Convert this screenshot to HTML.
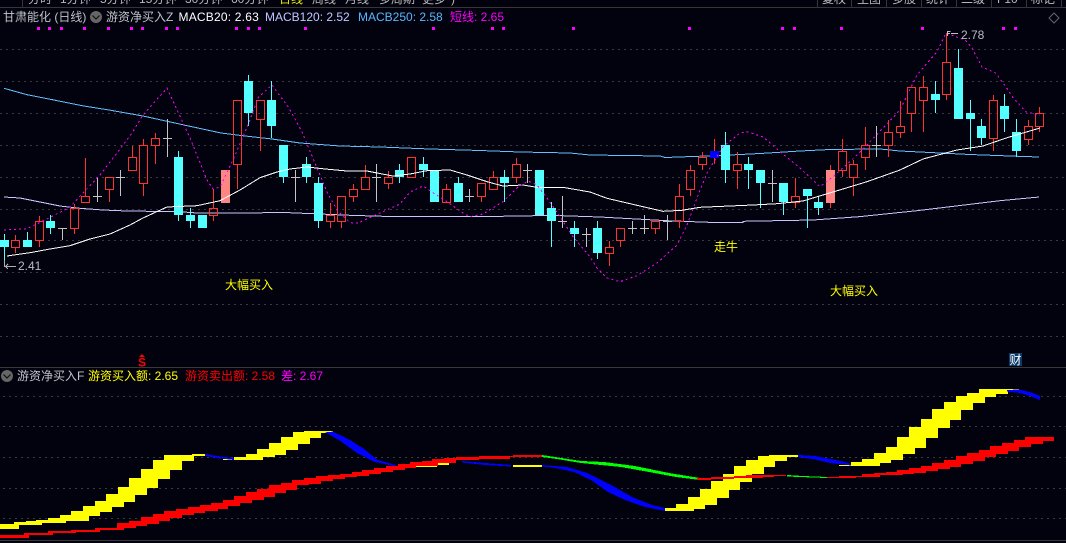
<!DOCTYPE html>
<html><head><meta charset="utf-8">
<style>
html,body{margin:0;padding:0;background:#02020e;width:1066px;height:543px;overflow:hidden}
svg{display:block}
text{font-family:"Liberation Sans","Noto Sans CJK SC",sans-serif;font-size:12px}
</style></head><body>
<svg width="1066" height="543" viewBox="0 0 1066 543" xmlns="http://www.w3.org/2000/svg">
<rect width="1066" height="543" fill="#02020e"/>

<!-- top bar -->
<g fill="#b8b8b8">
<text x="28" y="3">分时</text><text x="60" y="3">1分钟</text><text x="100" y="3">5分钟</text><text x="139" y="3">15分钟</text><text x="185" y="3">30分钟</text><text x="231" y="3">60分钟</text>
<text x="279" y="3" fill="#e8e800">日线</text><text x="312" y="3">周线</text><text x="345" y="3">月线</text><text x="379" y="3">多周期</text><text x="422" y="3">更多</text><text x="451" y="3">)</text>
<text x="822" y="3">复权</text><text x="857" y="3">主图</text><text x="892" y="3">多股</text><text x="926" y="3">统计</text><text x="961" y="3">二级</text><text x="997" y="3">F10</text><text x="1031" y="3">标记</text>
</g>
<path d="M0 7.5H1066M22.5 0V7M817.5 0V7M851.5 0V7M886.5 0V7M921.5 0V7M956.5 0V7M991.5 0V7M1026.5 0V7M1061.5 0V7" stroke="#363636" fill="none" shape-rendering="crispEdges"/>
<path d="M1054 13l5 5-5 5-5-5z" fill="none" stroke="#666"/>

<!-- header -->
<text x="3" y="21" fill="#bfc4c8">甘肃能化 (日线)</text>
<circle cx="96" cy="17" r="6" fill="#666"/><path d="M92.5 15.5l3.5 3.5 3.5-3.5" fill="none" stroke="#111" stroke-width="1.2"/>
<text x="106" y="21" fill="#bfc4c8">游资净买入Z</text>
<text x="178.5" y="21" fill="#fff" style="letter-spacing:.2px">MACB20: 2.63</text>
<text x="265" y="21" fill="#c0c8ff">MACB120: 2.52</text>
<text x="358" y="21" fill="#56b8ff">MACB250: 2.58</text>
<text x="450" y="21" fill="#ff00ff">短线: 2.65</text>

<!-- markers -->
<path d="M37 27h3v3h-3zM48 27h3v3h-3zM60 27h3v3h-3zM83 27h3v3h-3zM107 27h3v3h-3zM130 27h3v3h-3zM141 27h3v3h-3zM165 27h3v3h-3zM176 27h3v3h-3zM235 27h3v3h-3zM247 27h3v3h-3zM258 27h3v3h-3zM304 27h3v3h-3zM432 27h3v3h-3zM491 27h3v3h-3zM502 27h3v3h-3zM572 27h3v3h-3zM688 27h3v3h-3zM781 27h3v3h-3zM793 27h3v3h-3zM840 27h3v3h-3zM921 27h3v3h-3zM1002 27h3v3h-3zM1014 27h3v3h-3z" fill="#f0f"/>

<!-- grid -->
<path d="M0 49.5H1066M0 81.5H1066M0 113.5H1066M0 145.5H1066M0 177.5H1066M0 209.5H1066M0 240.5H1066M0 272.5H1066M0 304.5H1066M0 336.5H1066M3 396.5H1066M3 426.5H1066M3 457.5H1066M3 488.5H1066M3 518.5H1066" stroke="#3a3a3a" stroke-dasharray="2 4" fill="none" shape-rendering="crispEdges"/>

<!-- MA lines -->
<polyline fill="none" stroke="#62c0ff" shape-rendering="crispEdges" points="4,88.3 27,94.7 54,100 82,105.7 109,110 143,116 184,125 221,133 245,136 272,139 300,143 340,146 380,147 430,149 480,150.5 520,152 570,153 590,155 660,156 665,157.5 720,155.5 760,153.5 800,151 830,149.5 880,149 900,151 940,153 970,154.5 1010,156 1039,157"/>
<polyline fill="none" stroke="#c8c4ff" shape-rendering="crispEdges" points="4,197 20,198 60,206 80,208.3 103,210 127,211 180,211.7 197,213 253,213 280,212.3 350,215.3 383,216.3 470,216.7 523,216 550,215.3 600,217 667,220.7 709,222.3 743,222.3 743,221.3 813,220 859,216.7 917,210.7 1000,200.7 1039,197"/>

<!-- candles -->
<path d="M0 240h9v7h-9zM23 240h9v7h-9zM46 221h9v7h-9zM174 157h9v58h-9zM186 215h9v6h-9zM198 215h9v13h-9zM244 81h9v32h-9zM267 100h9v26h-9zM279 145h9v32h-9zM302 164h9v13h-9zM314 183h9v38h-9zM395 170h9v7h-9zM419 164h9v6h-9zM430 170h9v32h-9zM454 183h9v19h-9zM500 177h9v6h-9zM535 170h9v45h-9zM547 208h9v13h-9zM570 228h9v6h-9zM593 228h9v25h-9zM721 145h9v25h-9zM744 164h9v6h-9zM756 170h9v13h-9zM779 183h9v19h-9zM803 189h9v7h-9zM814 202h9v6h-9zM931 94h9v6h-9zM954 68h9v51h-9zM966 113h9v6h-9zM977 126h9v12h-9zM1000 106h9v13h-9zM1012 132h9v19h-9z" fill="#54ffff" shape-rendering="crispEdges"/>
<path d="M4.5 234V267M27.500 232V240M50.5 215V234M178.500 151V221M190.500 208V228M248.500 75V126M271.500 81V138M283.500 177V183M306.500 157V183M318.500 177V228M399.500 164V183M423.500 157V177M458.500 177V183M504.500 170V202M551.500 202V247M574.500 221V247M597.500 221V259M725.500 132V183M748.500 157V189M760.500 183V208M783.500 202V215M807.500 196V228M818.500 196V215M935.500 81V113M958.500 49V68M970.500 100V151M981.500 119V145M1004.500 94V132M1016.500 119V157" stroke="#54ffff" fill="none" shape-rendering="crispEdges"/>

<path d="M62.5 228V240M58 228.500h9M97.500 177V202M93 196.500h9M120.500 170V196M116 177.500h9M167.500 119V157M163 138.500h9M295.500 170V202M291 177.500h9M376.500 164V202M372 177.500h9M469.500 189V202M465 196.500h9M527.500 164V183M523 170.500h9M562.500 196V228M558 221.500h9M586.500 228V247M582 234.500h9M632.500 221V234M628 228.500h9M644.500 215V234M640 228.500h9M667.500 215V240M663 221.500h9M772.500 170V202M768 183.500h9M876.500 126V157M872 145.500h9" stroke="#c4c4c4" fill="none" shape-rendering="crispEdges"/>

<path d="M221 170h9v33h-9zM826 170h9v33h-9z" fill="#ff8484" shape-rendering="crispEdges"/>
<path d="M710 151h9v7h-9z" fill="#0000ff" shape-rendering="crispEdges"/>

<path fill="none" stroke="#ff3232" shape-rendering="crispEdges" d="
M15.500 235V240M15.500 248V253M11.500 240.500h8v7h-8z
M39.500 216V221M39.500 241V247M35.500 221.500h8v19h-8z
M74.500 204V208M74.500 229V234M70.500 208.500h8v20h-8z
M85.500 158V196M81.500 196.500h8v6h-8z
M109.500 190V202M105.500 177.500h8v12h-8z
M132.500 146V157M128.500 157.500h8v13h-8z
M143.500 139V145M143.500 184V196M139.500 145.500h8v38h-8z
M155.500 133V138M155.500 146V164M151.500 138.500h8v7h-8z
M213.500 189V208M213.500 216V221M209.500 208.500h8v7h-8z
M237.500 165V189M233.500 100.500h8v64h-8z
M260.500 120V151M256.500 100.500h8v19h-8z
M330.500 203V215M330.500 222V228M326.500 215.500h8v6h-8z
M341.500 222V228M337.500 196.500h8v25h-8z
M353.500 184V189M353.500 197V202M349.500 189.500h8v7h-8z
M365.500 165V177M361.500 177.500h8v12h-8z
M388.500 171V177M388.500 184V189M384.500 177.500h8v6h-8z
M407.500 157.500h8v20h-8z
M446.500 184V189M442.500 189.500h8v13h-8z
M481.500 197V202M477.500 183.500h8v13h-8z
M493.500 171V177M489.500 177.500h8v12h-8z
M516.500 158V164M516.500 178V183M512.500 164.500h8v13h-8z
M609.500 241V247M609.500 254V266M605.500 247.500h8v6h-8z
M620.500 241V247M616.500 228.500h8v12h-8z
M655.500 229V234M651.500 221.500h8v7h-8z
M679.500 184V196M679.500 222V228M675.500 196.500h8v25h-8z
M690.500 165V170M690.500 190V196M686.500 170.500h8v19h-8z
M702.500 152V157M702.500 165V170M698.500 157.500h8v7h-8z
M714.500 139V151M714.500 158V164
M737.500 152V164M737.500 171V189M733.500 164.500h8v6h-8z
M795.500 178V196M795.500 203V208M791.500 196.500h8v6h-8z
M830.500 165V170M830.500 203V208
M842.500 139V151M842.500 171V177M838.500 151.500h8v19h-8z
M853.500 160V164M853.500 178V196M849.500 164.500h8v13h-8z
M865.500 127V145M865.500 158V170M861.500 145.500h8v12h-8z
M888.500 120V132M888.500 146V157M884.500 132.500h8v13h-8z
M900.500 101V126M900.500 133V138M896.500 126.500h8v6h-8z
M911.500 114V132M907.500 87.500h8v26h-8z
M923.500 76V87M923.500 101V132M919.500 87.500h8v13h-8z
M946.500 33V62M946.500 95V100M942.500 62.500h8v32h-8z
M993.500 95V100M993.500 139V151M989.500 100.500h8v38h-8z
M1028.500 120V126M1028.500 140V145M1024.500 126.500h8v13h-8z
M1039.500 107V113M1039.500 127V132M1035.500 113.500h8v13h-8z"/>

<polyline fill="none" stroke="#fff" shape-rendering="crispEdges" points="7,256 30,252.700 50,249 70,245.700 90,239 110,234 130,225 143,218 167,207 197,205.700 220,200.700 240,190 260,177.700 277,172 290,169 307,167 325,169 347,171 367,171 377,173 393,176 410,174 427,170.700 450,170 467,175 487,181.700 503,186 523,185 537,187.300 565,187.700 590,192 607,198.300 640,206 663,211.300 682,210.300 700,207.300 730,206 753,205 777,203.700 803,201 833,192 867,181.700 900,170 923,159 957,150 983,146 1007,137.700 1040,128"/>

<polyline fill="none" stroke="#ff00ff" stroke-dasharray="2 3" shape-rendering="crispEdges" points="4,230 27,228.700 47,219 70,207 83,193 100,175 117,153 132,133 143,115 167,88 184,125 190,138 207,180 213,189 220,187 233,160 248,125 258.500,97 272,85 289,108 302,132 315,163 327,192 337,210 350,222.700 358,223 380,213 400,204 410,192 423,186 433,192.700 447,201.700 463,213 470,216.700 483,214 503,201.700 517,188 528,181 537,185 547,198 560,216.700 573,236.700 590,256.700 597,268 607,278 620,281.700 637,275.700 657,263 677,245 687,225 697,198 707,173 723,146.700 740,133 747,131.700 763,137 780,151.700 800,168 820,186.700 833,176.700 850,161.700 867,145 900,110 917,75 937,51.700 946,33 965,40 972,48 982,67 995.600,73 1006,87 1012.600,97 1026,112 1040,115"/>

<!-- labels -->
<path d="M947.500 36V31.500h3M947.500 33.500h2.500M951 33.500h7" fill="none" stroke="#c0c0c0" shape-rendering="crispEdges"/>
<text x="961" y="39" fill="#b8bcc0">2.78</text>
<path d="M4.500 260V266.500H16M8 264l-2.500 2.500 2.500 2.500" fill="none" stroke="#b0b0b0" shape-rendering="crispEdges"/>
<text x="18" y="270" fill="#b8bcc0">2.41</text>
<g fill="#ffff00">
<text x="225" y="289">大幅买入</text>
<text x="830" y="295">大幅买入</text>
<text x="714" y="251">走牛</text>
</g>

<!-- S and cai -->
<path d="M142 354l3 3h-6z" fill="#f00"/>
<text x="138" y="366.500" fill="#f00" style="font-size:12px;font-weight:bold">S</text>
<rect x="1009" y="353" width="13" height="13" fill="#0c3a68"/>
<text x="1009.500" y="364" fill="#fff">财</text>

<!-- lower panel -->
<path d="M0 367.500H1066M0 540.500H1066" stroke="#383838" fill="none" shape-rendering="crispEdges"/>
<circle cx="7" cy="376" r="6" fill="#666"/><path d="M3.500 374.500l3.500 3.500 3.500-3.500" fill="none" stroke="#111" stroke-width="1.2"/>
<text x="17" y="380" fill="#bfc4c8">游资净买入F</text>
<text x="88" y="380" fill="#ffff00">游资买入额: 2.65</text>
<text x="185" y="380" fill="#ff0000">游资卖出额: 2.58</text>
<text x="281" y="380" fill="#ff00ff">差: 2.67</text>

<g shape-rendering="crispEdges">
<!-- yellow -->
<path fill="#ff0" d="M0 524H14V522H26V521H36V520H48V518H60V515H71V511H83V506H95V501H106V494H118V487H129V478H141V469H153V460H164V455H192V454H205V456H194V461H182V470H170V479H158V488H147V495H135V502H124V507H112V512H100V516H89V521H66V523H42V525H19V529H0Z"/>
<path fill="#ff0" d="M223 459H234V457H246V454H257V449H269V443H281V437H293V432H304V431H333V433H321V438H310V444H298V450H286V455H275V457H263V460H223Z"/>
<path fill="#ff0" d="M414 463H449V465H437V467H414ZM513 465H542V467H513Z"/>
<path fill="#ff0" d="M665 508H676V504H688V497H700V489H711V481H723V474H734V466H746V460H758V456H769V455H798V457H787V461H775V467H764V474H752V482H740V490H729V498H717V505H705V509H694V511H665Z"/>
<path fill="#ff0" d="M839 465H851V462H862V459H874V453H886V447H897V437H909V427H921V419H932V409H944V402H956V396H967V393H979V389H1019V390H1008V394H996V397H985V403H973V410H961V420H950V428H938V438H926V448H915V454H903V460H891V463H880V466H839Z"/>
<!-- blue -->
<path fill="#0000ff" d="M205 454L217 456L234 458L234 460L217 458L205 456Z"/>
<path fill="#0000ff" d="M325 432L333 431.700L350 440L364 449L377.500 460L396 465L396 466.500L374 461.700L357 453L340 440.700Z"/>
<path fill="#0000ff" d="M462 461L485 463L511 465L511 466.500L485 465L462 462.500Z"/>
<path fill="#0000ff" d="M542 465L567 467L587 473L611 485L632 497L652 505L665 508L665 511L645 507L625 500L608 492L591 480L574 472L553 467.500L542 466.500Z"/>
<path fill="#0000ff" d="M798 455L815 456L830 459L845 462L851 464L851 465.500L830 463L815 459.500L798 457Z"/>
<path fill="#0000ff" d="M1007 390L1019 389.500L1030 392L1040 396L1040 400L1030 396L1020 393L1007 391.500Z"/>
<!-- green -->
<path fill="#00ff00" d="M542 455L581 461L604 462L635 466L669 473L700 478L700 480L676 477L649 472L621 467L581 463L557 459L542 457Z"/>
<path fill="#00ff00" d="M787 475L803 476L827 477L827 478L813 477.500L787 476.500Z"/>
<!-- red -->
<g fill="#f00">
<path d="M0 535H24V533H48V531H71V530H95V528H117V523H129V521H141V517H153V514H164V511H176V509H188V507H200V505H211V503H223V500H234V496H246V492H257V489H269V485H281V483H292V480H304V478H316V476H328V475H340V474H352V472H362V470H374V468H386V466H398V464H410V462H422V461H432V459H444V458H456V457H479V456H513V455H542V457H510V459H479V460H456V463H438V466H416V468H405V470H393V472H381V474H369V476H357V477H345V479H333V481H321V484H309V485H297V490H286V493H275V497H264V500H252V503H240V506H228V509H218V511H205V513H194V515H182V518H170V521H159V524H147V526H136V528H124V530H100V532H76V533H53V535H29V538H0Z"/>
<path d="M697 478H711V477H734V476H746V475H786V476H774V477H763V478H734V479H711V480H697Z"/>
<path d="M827 477H839V476H862V474H874V473H886V472H897V470H909V468H921V466H932V463H944V460H956V456H967V453H979V450H990V446H1002V443H1014V440H1025V437H1054V441H1043V444H1031V447H1019V451H1008V454H996V457H985V461H973V464H961V467H950V469H938V471H926V473H914V474H903V475H880V477H856V478H827Z"/>
</g>
</g>
</svg>
</body></html>
